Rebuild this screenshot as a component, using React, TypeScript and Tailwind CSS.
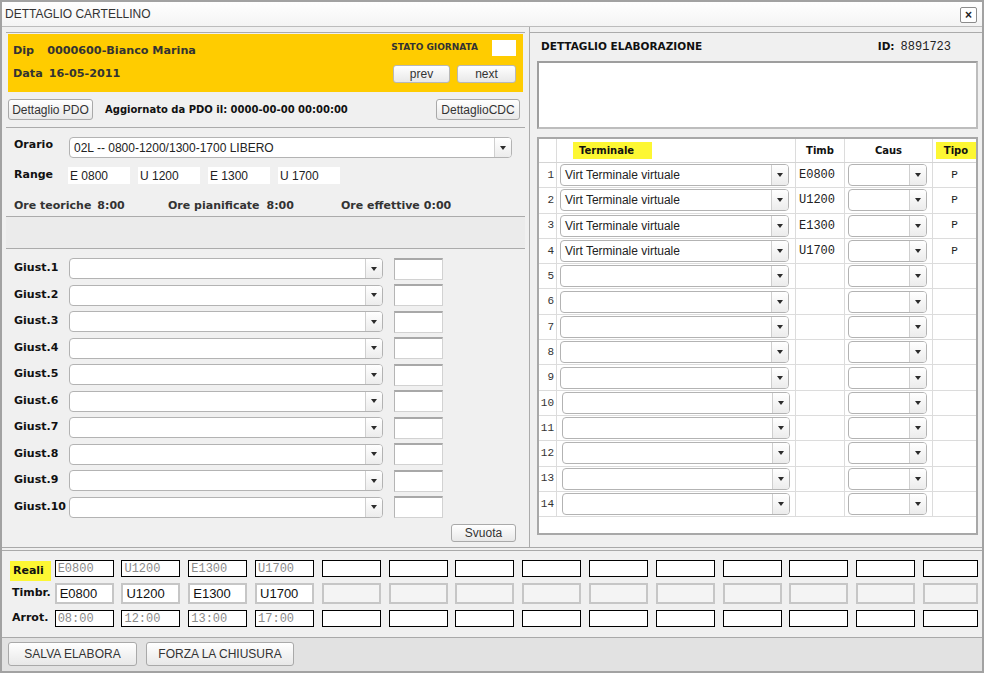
import React from 'react';

const VER = "font-['DejaVu_Sans',Verdana,sans-serif]";
const ARI = "font-['Liberation_Sans',Arial,sans-serif]";
const MON = "font-['Liberation_Mono','Courier_New',monospace]";

function Tri() {
  return (
    <svg width="6" height="4" viewBox="0 0 6 4">
      <path d="M0 0H6L3 4Z" fill="#2b2b2b" />
    </svg>
  );
}

function Select({ className = '', text = '' }: { className?: string; text?: string }) {
  return (
    <div className={`flex h-[21px] shrink-0 overflow-hidden rounded-[4px] border border-[#b3b3b3] bg-white ${className}`}>
      <div className={`flex flex-1 items-center overflow-hidden whitespace-nowrap pl-[4px] text-[12px] text-[#222] ${ARI}`}>{text}</div>
      <div className="flex w-[17px] items-center justify-center border-l border-[#cfcfcf] bg-gradient-to-b from-white to-[#ececec]">
        <Tri />
      </div>
    </div>
  );
}

function Btn({ className = '', children }: { className?: string; children: React.ReactNode }) {
  return (
    <button
      type="button"
      className={`flex shrink-0 items-center justify-center rounded-[3px] border border-[#a9a9a9] bg-gradient-to-b from-white to-[#e8e8e8] text-[12px] text-[#333] ${ARI} ${className}`}
    >
      {children}
    </button>
  );
}

export default function App() {
  const giust = [1, 2, 3, 4, 5, 6, 7, 8, 9, 10];
  const rows = Array.from({ length: 14 }, (_, i) => i + 1);
  const timb = ['E0800', 'U1200', 'E1300', 'U1700'];
  const arrot = ['08:00', '12:00', '13:00', '17:00'];
  const cols = Array.from({ length: 14 }, (_, i) => i);

  return (
    <div className={`flex h-[673px] w-[984px] flex-col overflow-hidden border-2 border-[#a2a2a2] bg-[#f0f0f0] text-[#222] ${VER}`}>
      {/* titolo finestra */}
      <div className="flex h-[25px] shrink-0 items-center justify-between border-b border-[#bcbcbc] bg-gradient-to-b from-white to-[#f4f4f4] pl-[3px] pr-[5px]">
        <span className={`text-[12px] text-[#333] ${ARI}`}>DETTAGLIO CARTELLINO</span>
        <div className={`mt-[2px] flex h-[16px] w-[17px] items-center justify-center rounded-[2px] border border-[#8c8c8c] bg-white text-[12px] font-bold leading-none ${ARI}`}>
          ×
        </div>
      </div>

      {/* corpo */}
      <div className="flex h-[521px] shrink-0 border-b border-[#a9a9a9]">
        {/* colonna sinistra */}
        <div className="flex w-[527px] flex-col px-[4px] pt-[5px]">
          <div className="border-y border-[#ababab]">
            <div className="mx-[2px] mt-[1px] flex h-[58px] justify-between bg-[#ffcc00] pl-[5px] pr-[7px] text-[#333]">
              <div className="flex flex-col gap-[9px] pt-[10px] text-[11.2px] font-bold leading-[14px]">
                <div>
                  <span>Dip</span>
                  <span className="ml-[13px]">0000600-Bianco Marina</span>
                </div>
                <div>
                  <span>Data</span>
                  <span className="ml-[6px]">16-05-2011</span>
                </div>
              </div>
              <div className="flex flex-col items-end pt-[6px]">
                <div className="flex items-center">
                  <span className="text-[9px] font-bold">STATO GIORNATA</span>
                  <div className="ml-[14px] h-[16px] w-[24px] bg-white" />
                </div>
                <div className="mt-[9px] flex gap-[7px]">
                  <Btn className="h-[18px] w-[57px] border-[#b8b8b8]">prev</Btn>
                  <Btn className="h-[18px] w-[59px] border-[#b8b8b8]">next</Btn>
                </div>
              </div>
            </div>
            <div className="mx-[2px] flex h-[35px] items-center pr-[3px]">
              <Btn className="h-[21px] w-[85px]">Dettaglio PDO</Btn>
              <span className="ml-[12px] text-[10px] font-bold text-[#111]">Aggiornato da PDO il: 0000-00-00 00:00:00</span>
              <Btn className="ml-auto h-[21px] w-[84px]">DettaglioCDC</Btn>
            </div>
          </div>

          {/* orario */}
          <div className="h-[89px] border-b border-[#ababab] pl-[8px] pt-[9px]">
            <div className="flex h-[21px] items-center">
              <span className="mb-[4px] w-[55px] text-[11px] font-bold text-[#111]">Orario</span>
              <Select className="w-[443px]" text="02L -- 0800-1200/1300-1700 LIBERO" />
            </div>
            <div className="mt-[9px] flex h-[17px] items-center">
              <span className="w-[54px] text-[11px] font-bold text-[#111]">Range</span>
              <div className="flex gap-[8px]">
                {['E 0800', 'U 1200', 'E 1300', 'U 1700'].map((r) => (
                  <div key={r} className={`flex h-[17px] w-[62px] items-center bg-white pl-[2px] text-[12px] text-[#222] ${ARI}`}>
                    {r}
                  </div>
                ))}
              </div>
            </div>
            <div className="mt-[15px] flex h-[14px] items-center text-[11px] font-bold text-[#333]">
              <span className="w-[154px]">
                Ore teoriche<span className="ml-[6px]">8:00</span>
              </span>
              <span className="w-[173px]">
                Ore pianificate<span className="ml-[7px]">8:00</span>
              </span>
              <span>
                Ore effettive<span className="ml-[4px]">0:00</span>
              </span>
            </div>
          </div>

          <div className="h-[32px] border-b border-[#ababab] bg-[#ebebeb]" />

          {/* giustificativi */}
          <div className="flex-1 pl-[8px] pt-[9px]">
            <div className="flex flex-col gap-[5.5px]">
              {giust.map((n) => (
                <div key={n} className="flex h-[21px] items-center">
                  <span className="w-[55px] whitespace-nowrap text-[11px] font-bold text-[#111]">Giust.{n}</span>
                  <Select className="w-[314px]" />
                  <div className="ml-[11px] h-[22px] w-[49px] border border-t-2 border-[#d2d2d2] border-t-[#a8a8a8] border-l-[#b5b5b5] bg-white" />
                </div>
              ))}
            </div>
            <div className="mt-[6px] flex justify-end pr-[9px]">
              <Btn className="h-[18px] w-[65px]">Svuota</Btn>
            </div>
          </div>
        </div>

        {/* colonna destra */}
        <div className="flex flex-1 flex-col border-l border-[#ababab] pt-[5px]">
          <div className="flex flex-col border-t border-[#ababab] pl-[7px] pr-[4px]">
            <div className="flex h-[28px] items-center justify-between pl-[4px] pr-[27px]">
              <span className="text-[10.5px] font-bold text-[#111]">DETTAGLIO ELABORAZIONE</span>
              <span className="flex items-baseline">
                <span className="text-[10.5px] font-bold text-[#111]">ID:</span>
                <span className={`ml-[6px] text-[12px] text-[#222] ${MON}`}>8891723</span>
              </span>
            </div>
            <div className="h-[68px] border-2 border-[#bdbdbd] border-l-[#9e9e9e] border-t-[#9e9e9e] bg-white" />

            <div className="mt-[8px] flex h-[398px] flex-col border-2 border-[#a8a8a8] bg-white">
              <div className="flex h-[24px] shrink-0 border-b border-[#d4d4d4] text-[10px] font-bold text-[#111]">
                <div className="w-[18px] border-r border-[#dcdcdc]" />
                <div className="flex w-[239px] items-center border-r border-[#dcdcdc]">
                  <span className="ml-[16px] h-[17px] bg-[#fdf733] pl-[6px] pr-[18px] leading-[17px]">Terminale</span>
                </div>
                <div className="flex w-[49px] items-center justify-center border-r border-[#dcdcdc]">Timb</div>
                <div className="flex w-[88px] items-center justify-center border-r border-[#dcdcdc]">Caus</div>
                <div className="flex w-[43px] items-center">
                  <span className="ml-[3px] h-[17px] w-[40px] bg-[#fdf733] text-center leading-[17px]">Tipo</span>
                </div>
              </div>
              {rows.map((r) => (
                <div key={r} className="flex h-[25.3px] shrink-0 border-b border-[#dcdcdc]">
                  <div className={`flex w-[18px] items-center justify-end border-r border-[#dcdcdc] pr-[2px] text-[11px] text-[#333] ${MON}`}>{r}</div>
                  <div className="flex w-[239px] items-center border-r border-[#dcdcdc]">
                    <Select
                      className={r >= 10 ? 'ml-[5px] h-[22px] w-[228px]' : 'ml-[3px] h-[22px] w-[229px]'}
                      text={r <= 4 ? 'Virt Terminale virtuale' : ''}
                    />
                  </div>
                  <div className={`flex w-[49px] items-center border-r border-[#dcdcdc] pl-[3px] text-[12px] text-[#222] ${MON}`}>
                    {r <= 4 ? timb[r - 1] : ''}
                  </div>
                  <div className="flex w-[88px] items-center border-r border-[#dcdcdc]">
                    <Select className="ml-[3px] h-[22px] w-[79px]" />
                  </div>
                  <div className={`flex w-[43px] items-center justify-center text-[11px] text-[#222] ${MON}`}>{r <= 4 ? 'P' : ''}</div>
                </div>
              ))}
            </div>
          </div>
        </div>
      </div>

      {/* timbrature */}
      <div className="mt-[2px] flex h-[87px] shrink-0 flex-col gap-[6px] border-t border-[#a9a9a9] pl-[8px] pr-[4px] pt-[9px]">
        <div className="flex h-[17px] items-center">
          <div className="w-[45px]">
            <span className="inline-block h-[20px] w-[41px] bg-[#fdf733] pl-[3px] text-[11px] font-bold leading-[20px] text-[#111]">Reali</span>
          </div>
          <div className="flex gap-[7.8px]">
            {cols.map((c) => (
              <div
                key={c}
                className={`flex h-[17px] shrink-0 items-center border border-black bg-white pl-[2px] text-[12px] text-[#8a8a8a] ${MON} ${c === 13 ? 'w-[55px]' : 'w-[59px]'}`}
              >
                {timb[c] ?? ''}
              </div>
            ))}
          </div>
        </div>
        <div className="flex h-[21px] items-center">
          <span className="w-[45px] pl-[2px] text-[11px] font-bold text-[#111]">Timbr.</span>
          <div className="flex gap-[7.8px]">
            {cols.map((c) => (
              <div
                key={c}
                className={`flex h-[21px] shrink-0 items-center border-2 border-[#c6c6c6] pl-[3px] text-[13px] text-[#111] ${ARI} ${timb[c] ? 'bg-white' : 'bg-[#f4f4f4]'} ${c === 13 ? 'w-[55px]' : 'w-[59px]'}`}
              >
                {timb[c] ?? ''}
              </div>
            ))}
          </div>
        </div>
        <div className="flex h-[17px] items-center">
          <span className="w-[45px] pl-[2px] text-[11px] font-bold text-[#111]">Arrot.</span>
          <div className="flex gap-[7.8px]">
            {cols.map((c) => (
              <div
                key={c}
                className={`flex h-[17px] shrink-0 items-center border border-black bg-white pl-[2px] text-[12px] text-[#8a8a8a] ${MON} ${c === 13 ? 'w-[55px]' : 'w-[59px]'}`}
              >
                {arrot[c] ?? ''}
              </div>
            ))}
          </div>
        </div>
      </div>

      {/* pulsanti */}
      <div className="flex h-[34px] shrink-0 gap-[9px] border-t border-[#a9a9a9] bg-[#e2e2e2] pl-[6px] pt-[4px]">
        <Btn className="h-[24px] w-[129px]">SALVA ELABORA</Btn>
        <Btn className="h-[24px] w-[148px]">FORZA LA CHIUSURA</Btn>
      </div>
    </div>
  );
}
